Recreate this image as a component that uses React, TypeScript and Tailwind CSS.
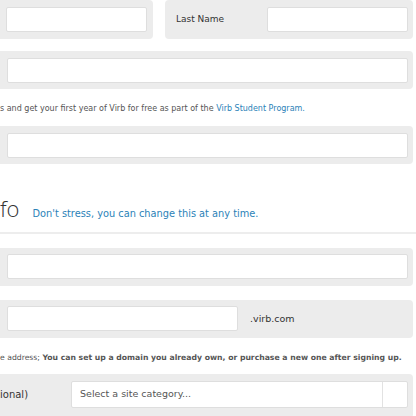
const box = 'rounded-[4px] bg-[#ececec] h-[38px] flex items-center';
const input = 'h-[25px] bg-white border border-[#dedede] rounded-[2px]';

export default function App() {
  return (
    <div className="w-[416px] h-[416px] overflow-hidden bg-white text-[#333] font-['DejaVu_Sans',sans-serif]">
      {/* Name row */}
      <div className="flex gap-[12px] h-[39px]">
        <div className="w-[153px] rounded-r-[4px] bg-[#ececec] flex items-center pl-[6px] pr-[6px]">
          <div className={input + ' w-full'} />
        </div>
        <div className="flex-1 mr-[3px] rounded-[4px] bg-[#ececec] flex items-center pl-[11px] pr-[5px]">
          <span className="w-[91px] text-[9px] font-medium">Last Name</span>
          <div className={input + ' flex-1'} />
        </div>
      </div>

      <div className={box + ' mt-[12px] mr-[3px] rounded-l-none pl-[7px] pr-[5px]'}>
        <div className={input + ' w-full'} />
      </div>

      <p className="mt-[14px] text-[8px] leading-[12px] text-[#555] whitespace-nowrap">
        s and get your first year of Virb for free as part of the{' '}
        <span className="text-[#2b82b8]">Virb Student Program.</span>
      </p>

      <div className={box + ' mt-[11px] mr-[3px] rounded-l-none pl-[7px] pr-[5px]'}>
        <div className={input + ' w-full'} />
      </div>

      {/* Section heading */}
      <div className="mt-[32px] flex items-baseline gap-[13px] whitespace-nowrap">
        <span className="text-[22px] leading-[25px] font-light font-['Open_Sans',sans-serif] text-[#333]">fo</span>
        <span className="text-[9.8px] text-[#2b82b8]">Don't stress, you can change this at any time.</span>
      </div>
      <div className="mt-[10px] h-[2px] bg-[#ededed]" />

      <div className={box + ' mt-[14px] mr-[3px] rounded-l-none pl-[7px] pr-[5px]'}>
        <div className={input + ' w-full'} />
      </div>

      <div className={box + ' mt-[14px] mr-[3px] rounded-l-none pl-[7px] pr-[5px]'}>
        <div className={input + ' w-[231px]'} />
        <span className="ml-[12px] text-[9.5px]">.virb.com</span>
      </div>

      <p className="mt-[14px] text-[7.7px] leading-[12px] text-[#555] whitespace-nowrap">
        e address; <span className="font-bold">You can set up a domain you already own, or purchase a new one after signing up.</span>
      </p>

      <div className="mt-[10px] mr-[3px] h-[44px] rounded-r-[4px] bg-[#ececec] flex items-start pt-[7px] pr-[5px]">
        <span className="w-[71px] mt-[6px] text-[10px] font-medium">ional)</span>
        <div className="flex-1 h-[27px] bg-white border border-[#dedede] rounded-[2px] flex items-center">
          <span className="flex-1 pl-[8px] text-[9.5px] text-[#555]">Select a site category...</span>
          <div className="w-[25px] h-full border-l border-[#e2e2e2]" />
        </div>
      </div>
    </div>
  );
}
